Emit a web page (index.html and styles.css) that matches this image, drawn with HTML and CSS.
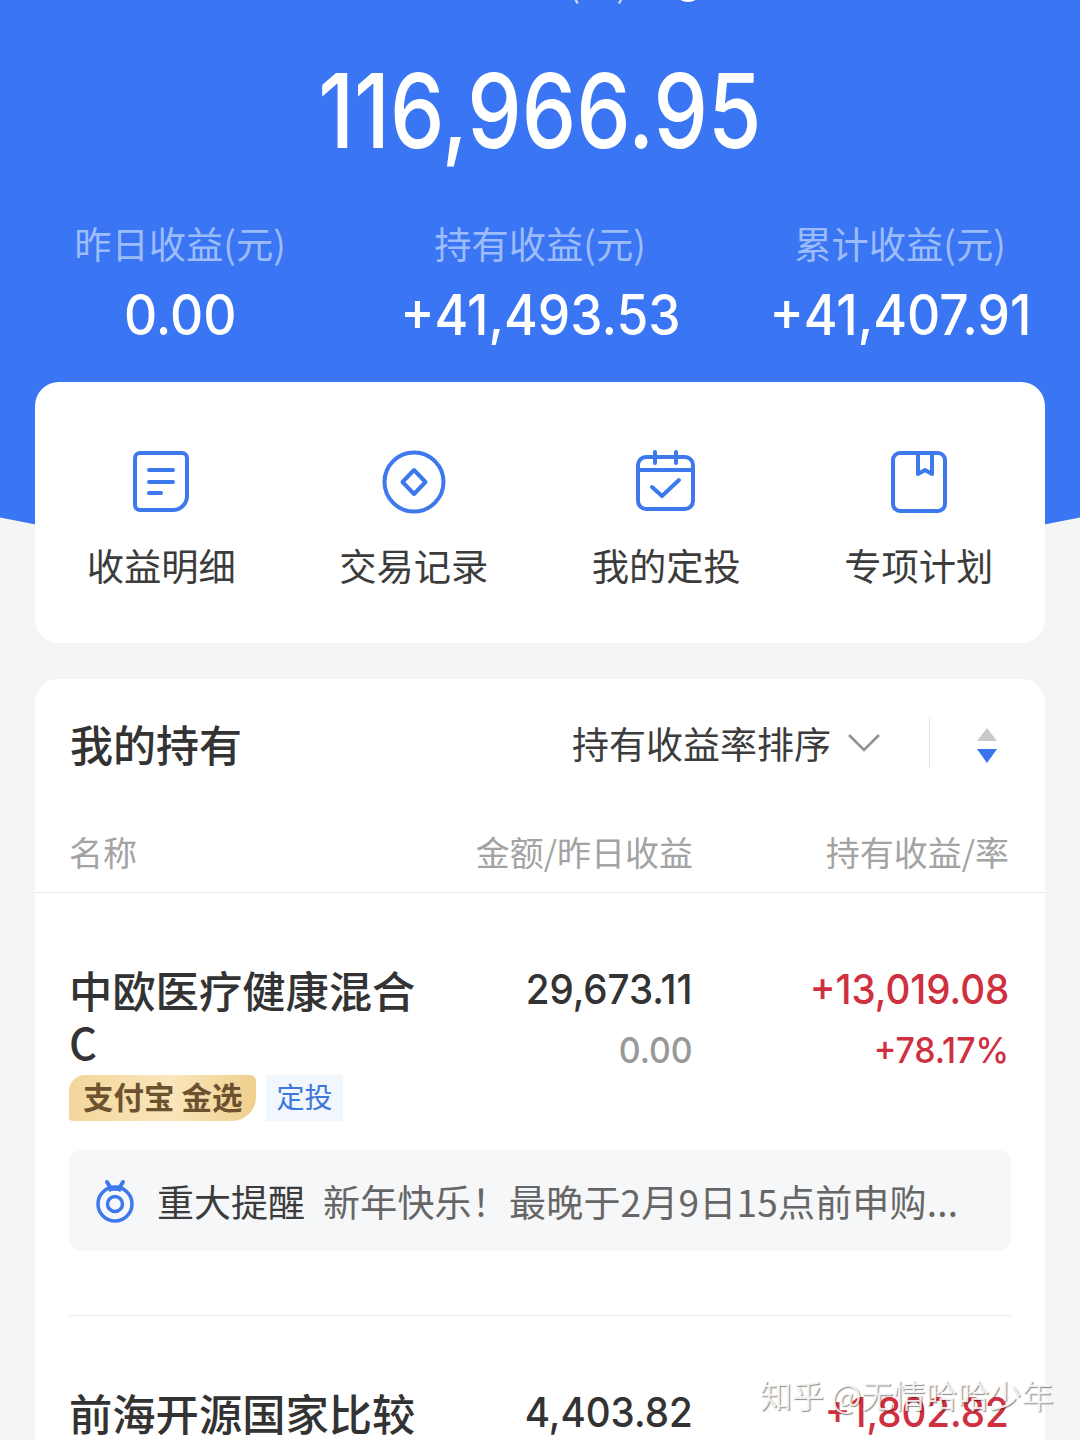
FILE: index.html
```html
<!DOCTYPE html>
<html lang="zh-CN">
<head>
  <meta charset="UTF-8">
  <title>我的持有</title>
  <link rel="stylesheet" href="styles.css">
</head>
<body>
  <div class="page">
    <div class="hero-bg"></div>

    <header class="hero">
      <div class="total-label">
        <span>总金额(元)</span>
        <svg class="eye" width="36" height="36" viewBox="0 0 36 36"><circle cx="18" cy="18" r="13" fill="none" stroke="#fff" stroke-width="4"/></svg>
      </div>
      <div class="total"><span>116,966.95</span></div>
      <div class="stats">
        <div class="stat">
          <div class="stat-label">昨日收益(元)</div>
          <div class="stat-num"><span>0.00</span></div>
        </div>
        <div class="stat">
          <div class="stat-label">持有收益(元)</div>
          <div class="stat-num"><span>+41,493.53</span></div>
        </div>
        <div class="stat">
          <div class="stat-label">累计收益(元)</div>
          <div class="stat-num"><span>+41,407.91</span></div>
        </div>
      </div>
    </header>

    <nav class="card shortcuts">
      <div class="shortcut">
        <svg width="60" height="64" viewBox="0 0 60 64" fill="none" stroke="#3d78ec" stroke-width="4" stroke-linecap="round" stroke-linejoin="round">
          <path d="M9 3h42a5 5 0 0 1 5 5v38a14 14 0 0 1-14 14H9a5 5 0 0 1-5-5V8a5 5 0 0 1 5-5z"/>
          <path d="M18 20h24M18 32h24M18 43h12"/>
        </svg>
        <span>收益明细</span>
      </div>
      <div class="shortcut">
        <svg width="64" height="64" viewBox="0 0 64 64" fill="none" stroke="#3d78ec" stroke-width="4" stroke-linejoin="round">
          <circle cx="32" cy="32" r="29.500"/>
          <path d="M32 20l11.500 12L32 44 20.500 32z"/>
        </svg>
        <span>交易记录</span>
      </div>
      <div class="shortcut">
        <svg width="60" height="64" viewBox="0 0 60 64" fill="none" stroke="#3d78ec" stroke-width="4" stroke-linecap="round" stroke-linejoin="round">
          <rect x="2" y="7" width="55" height="52" rx="8"/>
          <path d="M2 20h55M19 2v11M40 2v11"/>
          <path d="M16 37l10 9 17-16"/>
        </svg>
        <span>我的定投</span>
      </div>
      <div class="shortcut">
        <svg width="56" height="64" viewBox="0 0 56 64" fill="none" stroke="#3d78ec" stroke-width="4" stroke-linejoin="round">
          <rect x="2" y="3" width="52" height="58" rx="7"/>
          <path d="M27 3v21l7-4 7 4V3"/>
        </svg>
        <span>专项计划</span>
      </div>
    </nav>

    <section class="card holdings">
      <div class="holdings-head">
        <h2>我的持有</h2>
        <div class="sort">
          <span>持有收益率排序</span>
          <svg width="34" height="20" viewBox="0 0 34 20" fill="none" stroke="#8f8f8f" stroke-width="2.500"><path d="M2 2l15 15L32 2"/></svg>
        </div>
        <div class="sort-toggle">
          <svg width="24" height="38" viewBox="0 0 24 38"><path d="M12 1l10 13H2z" fill="#c9c9c9"/><path d="M2 22h20L12 36z" fill="#3a75ee"/></svg>
        </div>
      </div>

      <div class="cols">
        <div class="col-name">名称</div>
        <div class="col-amount">金额/昨日收益</div>
        <div class="col-profit">持有收益/率</div>
      </div>

      <div class="fund">
        <div class="fund-row">
          <div class="col-name">
            <div class="fund-name">中欧医疗健康混合C</div>
            <div class="tags">
              <span class="tag-gold">支付宝 金选</span>
              <span class="tag-blue">定投</span>
            </div>
          </div>
          <div class="col-amount">
            <div class="num"><span>29,673.11</span></div>
            <div class="num-sub"><span>0.00</span></div>
          </div>
          <div class="col-profit">
            <div class="num red"><span>+13,019.08</span></div>
            <div class="num-sub red"><span>+78.17%</span></div>
          </div>
        </div>
        <div class="notice">
          <svg width="40" height="44" viewBox="0 0 40 44" fill="none" stroke="#3d78ec" stroke-width="3.500">
            <circle cx="20" cy="25" r="17"/>
            <circle cx="20" cy="25" r="7.500"/>
            <path d="M14 12c2-2 10-2 12 0" stroke-width="2.500"/>
            <path d="M12 3l3 5M28 3l-3 5" stroke-width="4" stroke-linecap="round"/>
          </svg>
          <strong>重大提醒</strong>
          <span>新年快乐！最晚于2月9日15点前申购...</span>
        </div>
      </div>

      <div class="fund fund-next">
        <div class="fund-row">
          <div class="col-name">
            <div class="fund-name">前海开源国家比较</div>
          </div>
          <div class="col-amount">
            <div class="num"><span>4,403.82</span></div>
          </div>
          <div class="col-profit">
            <div class="num red"><span>+1,802.82</span></div>
          </div>
        </div>
      </div>
    </section>

    <div class="watermark">知乎 @无情哈哈少年</div>
  </div>
</body>
</html>
```

FILE: styles.css
```css
* {
  box-sizing: border-box;
}
html, body {
  margin: 0;
  height: 1440px;
  overflow: hidden;
}
body {
  font-family: "Noto Sans CJK SC", sans-serif;
  background: #f5f5f5;
  color: #333;
}
.page {
  position: relative;
  height: 1440px;
  overflow: hidden;
  background: #f5f5f5;
}
.hero-bg {
  position: absolute;
  top: 0;
  left: 0;
  width: 100%;
  height: 580px;
  background: #3a75f3;
  clip-path: ellipse(1300px 569px at 50% 0);
}
.hero {
  display: flow-root;
  position: relative;
  color: #fff;
  text-align: center;
  height: 382px;
}
.total-label {
  display: flex;
  align-items: flex-end;
  gap: 42px;
  height: 50px;
  margin-top: -44px;
  padding-left: 460px;
  font-size: 36px;
  line-height: 50px;
  color: #c5d7fc;
}
.eye {
  flex: none;
  margin-bottom: 1px;
}
.total {
  margin-top: 45px;
  font-family: Inter, sans-serif;
  font-size: 103px;
  line-height: 120px;
  font-weight: 500;
}
.total span {
  display: inline-block;
  transform: scaleX(0.84);
}
.stats {
  display: grid;
  grid-template-columns: 360px 360px 360px;
  margin-top: 47px;
}
.stat-label {
  font-size: 37.300px;
  line-height: 50px;
  color: #9dbcfb;
}
.stat-num {
  margin-top: 16px;
  font-family: Inter, sans-serif;
  font-size: 56px;
  line-height: 62px;
  font-weight: 500;
}
.stat-num span {
  display: inline-block;
  transform: scaleX(0.92);
}
.card {
  position: relative;
  margin: 0 35px;
  background: #fff;
  border-radius: 24px;
}
.shortcuts {
  display: grid;
  grid-template-columns: repeat(4, 1fr);
  height: 261px;
  padding: 68px 0 0;
}
.shortcut {
  display: flex;
  flex-direction: column;
  align-items: center;
  font-size: 37.300px;
  line-height: 50px;
  color: #3c3c3c;
}
.shortcut span {
  margin-top: 26px;
}
.holdings {
  margin-top: 36px;
  height: 800px;
}
.holdings-head {
  display: flex;
  align-items: center;
  height: 128px;
  padding: 0 35px;
}
.holdings-head h2 {
  margin: 0;
  flex: 1;
  font-size: 43px;
  font-weight: 500;
  line-height: 56px;
}
.sort {
  display: flex;
  align-items: center;
  gap: 16px;
  font-size: 37px;
  line-height: 50px;
  color: #3c3c3c;
}
.sort-toggle {
  display: flex;
  align-items: center;
  height: 52px;
  margin-left: 48px;
  padding-left: 45px;
  padding-right: 11px;
  border-left: 1px solid #e4e4e4;
}
.sort-toggle svg {
  margin-top: 6px;
}
.cols {
  display: flex;
  align-items: center;
  height: 86px;
  padding: 4px 36px 0 34px;
  border-bottom: 1px solid #ececec;
  font-size: 34px;
  line-height: 46px;
  color: #a3a3a3;
}
.col-name {
  width: 352px;
}
.col-amount {
  width: 272px;
  text-align: right;
}
.col-profit {
  flex: 1;
  text-align: right;
}
.fund {
  margin: 0 34px;
  padding-top: 70px;
}
.fund-row {
  display: flex;
  padding-right: 2px;
}
.fund-name {
  font-size: 43.300px;
  font-weight: 500;
  line-height: 52px;
  word-break: break-all;
}
.tags {
  display: flex;
  align-items: center;
  gap: 10px;
  margin-top: 8px;
}
.tag-gold {
  display: block;
  width: 187px;
  height: 46px;
  padding-left: 14px;
  border-radius: 16px 6px 24px 4px;
  background: linear-gradient(90deg, #f3d69b, #fae6bb 55%, #efcf8c);
  font-size: 30.500px;
  font-weight: 700;
  line-height: 43px;
  color: #6d5230;
  white-space: nowrap;
}
.tag-blue {
  display: block;
  width: 77px;
  height: 46px;
  background: #f2f6fd;
  font-size: 28px;
  line-height: 43px;
  color: #3d78dc;
  text-align: center;
}
.num {
  font-family: Inter, sans-serif;
  font-size: 41px;
  line-height: 52px;
  font-weight: 500;
  color: #333;
}
.num-sub {
  margin-top: 10px;
  font-family: Inter, sans-serif;
  font-size: 36px;
  line-height: 50px;
  font-weight: 500;
  color: #999;
}
.num span, .num-sub span {
  display: inline-block;
  transform: scaleX(0.94);
  transform-origin: right center;
}
.red {
  color: #cf3040;
}
.notice {
  display: flex;
  align-items: center;
  height: 101px;
  margin-top: 29px;
  padding-left: 26px;
  background: #f6f7f8;
  border-radius: 12px;
  font-size: 37px;
  color: #666;
}
.notice svg {
  flex: none;
  margin-right: 22px;
}
.notice strong {
  margin-right: 18px;
  font-weight: 400;
  color: #3c3c3c;
}
.notice span {
  letter-spacing: 0.200px;
}
.fund-next {
  margin-top: 64px;
  padding-top: 70px;
  border-top: 1px solid #ececec;
}
.watermark {
  position: absolute;
  left: 760px;
  top: 1373px;
  font-size: 32px;
  line-height: 42px;
  color: rgba(255,255,255,0.85);
  text-shadow: 1px 1px 1px rgba(0,0,0,0.45);
  white-space: nowrap;
}
```
